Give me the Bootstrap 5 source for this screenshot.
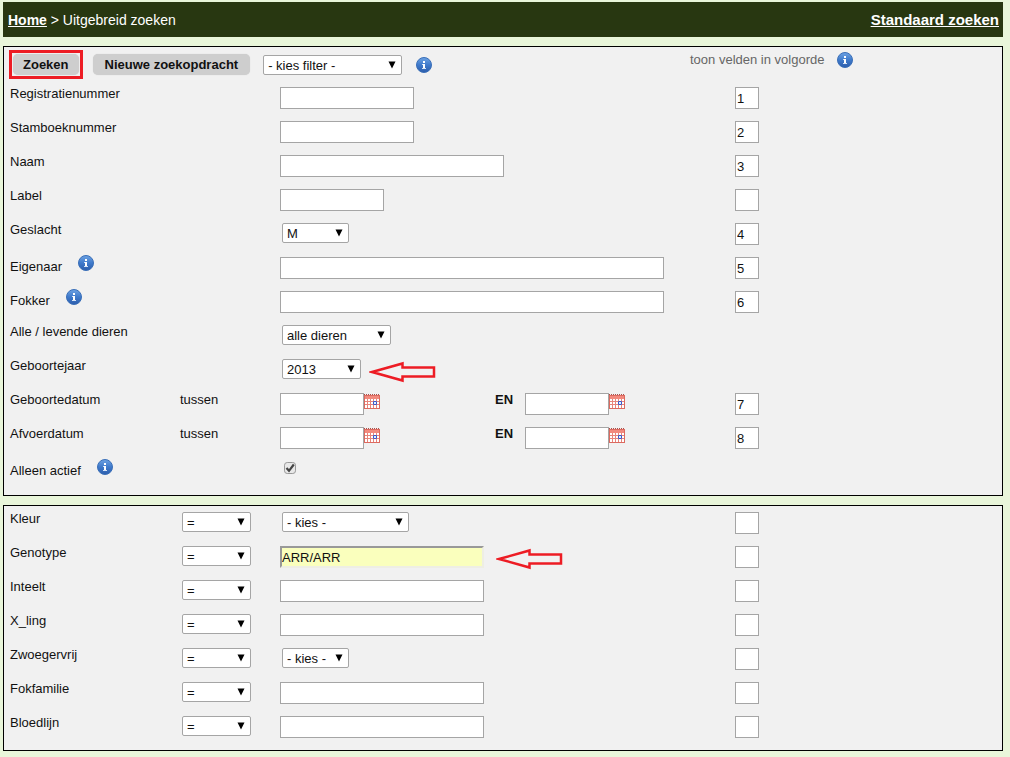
<!DOCTYPE html>
<html lang="nl">
<head>
<meta charset="utf-8">
<meta name="viewport" content="width=device-width, initial-scale=1">
<title>Uitgebreid zoeken</title>
<link href="https://cdn.jsdelivr.net/npm/bootstrap@5.3.0/dist/css/bootstrap.min.css" rel="stylesheet">
<style>
body{background:#e9f6da;font-family:"Liberation Sans",Arial,sans-serif;font-size:13px;line-height:20px;color:#111;padding:2px 7px 6px 3px}
.topbar{background:#283711;color:#fff;font-size:14px;height:35px;padding:0 4px 0 5px}
.topbar a{color:#fff;font-weight:bold}
.topbar .mode-link{font-size:15px}
.panel{background:#f1f1f1;border:1px solid #000;margin-top:9px;padding:2px 0 4px 6px}
.panel-main{padding-top:3px}
.toolrow{height:33px}
.toolrow,.field-row{display:grid;grid-template-columns:170px 100px minmax(0,455fr) minmax(0,267fr);align-items:start}
.toolrow{grid-template-columns:minmax(0,680fr) minmax(0,312fr)}
.tools{margin-left:-1px}
.tools .form-select{margin:0 14px 0 13px}
.field-row{height:34px}
.lbl{padding-top:1px}
.lbl-info{padding-top:4px}
.ctl{display:flex;align-items:start;padding-top:4px}
.ctl .form-select{margin-left:2px}
.daterange{display:grid;grid-template-columns:215px 30px 1fr}
.form-control{width:auto;height:22px;padding:0 1px;border:1px solid #a5a5a5;border-radius:0;font-size:13px;line-height:20px;color:#111;background:#fff}
.form-select{width:auto;height:20px;padding:1px 18px 0 4px;border:1px solid #a5a5a5;border-radius:2px;font-size:13px;line-height:17px;color:#111;background:#fff url("data:image/svg+xml,%3Csvg xmlns='http://www.w3.org/2000/svg' viewBox='0 0 8 8'%3E%3Cpath d='M.5.5h7L4 7.5z'/%3E%3C/svg%3E") no-repeat right 5px center/8px 8px}
.form-control.w-order{width:24px}
.form-control.w-number{width:134px}
.form-control.w-name{width:224px}
.form-control.w-tag{width:104px}
.form-control.w-person{width:384px}
.form-control.w-trait{width:204px}
.form-control.w-date{width:84px}
.s-filter{width:139px}
.s-small{width:67px}
.s-animals{width:109px}
.s-year{width:79px}
.s-color{width:127px}
.s-op{width:69px}
.form-control.filled{background:#faffbd;border:2px solid;border-color:#999 #eeeee4 #eeeee4 #999;padding:0}
.greybtn{height:21px;padding:0 10px;border:0;border-radius:5px;background:#cecece;color:#111;font-size:13px;font-weight:bold;line-height:21px;box-shadow:0 0 1px #ccc}
.greybtn-wide{padding:0 12px;margin-left:10px}
.marked{border:3px solid #ed1c24;padding:1px;height:29px}
.iconbtn{display:block;flex:none;padding:0;border:0;background:none;width:16px;height:16px}
.iconbtn svg,.arrow{display:block}
.field-info{margin-top:2px}
.order-head{color:#666}
.order-head .iconbtn{margin-left:13px}
.arrow{flex:none;margin:2px 0 0 8px}
.filled + .arrow{margin-left:12px}
.form-check-input{width:12px;height:12px;margin:1px 0 0;border:1px solid #999;border-radius:2px;background-color:#e8e8e8}
.form-check-input:checked{background-color:#e8e8e8;border-color:#999;background-size:12px 12px;background-image:url("data:image/svg+xml,%3Csvg xmlns='http://www.w3.org/2000/svg' viewBox='0 0 12 12'%3E%3Cpath d='M2.500 6 5 8.800 9.800 2.500' fill='none' stroke='%23444' stroke-width='2.200'/%3E%3C/svg%3E")}
</style>
</head>
<body>
<svg width="0" height="0" class="position-absolute" aria-hidden="true">
  <defs>
    <linearGradient id="blue" x1="0" y1="0" x2="0" y2="1"><stop offset="0" stop-color="#6ea3e3"/><stop offset=".5" stop-color="#3f7acb"/><stop offset="1" stop-color="#2c5dab"/></linearGradient>
    <symbol id="info" viewBox="0 0 16 16"><circle cx="8" cy="8" r="7.500" fill="url(#blue)" stroke="#3a6fb8"/><path d="M7 4h2v2H7zM7 7h2v5H7z" fill="#fff"/><path d="M6 7h1v1H6zM6 11h4v1H6z" fill="#d5e3f6"/></symbol>
    <symbol id="cal" viewBox="0 0 16 16"><path d="M0 2h16v14H0z" fill="#dc6a60"/><path d="M1 3h14v3H1z" fill="#f28a7e"/><path d="M0 1.500h16" stroke="#a8504a" stroke-dasharray="1 1"/><path d="M1 6h14v9H1z" fill="#fff"/><path d="M1 8.500h14M1 11.500h14M3.500 6v9M6.500 6v9M9.500 6v9M12.500 6v9" stroke="#e8857b"/><path d="M9.500 8.500h3v3h-3z" fill="#dff0ff" stroke="#3d58c8"/></symbol>
    <symbol id="arrow" viewBox="0 0 68 22"><path d="M3 11 33.500 2.500V6.500h31.500v9H33.500v4z" fill="none" stroke="#ed1c24" stroke-width="2.500"/></symbol>
  </defs>
</svg>

<nav class="topbar d-flex align-items-center justify-content-between">
  <div><a href="#">Home</a> &gt; Uitgebreid zoeken</div>
  <a href="#" class="mode-link">Standaard zoeken</a>
</nav>

<form>
<section class="panel panel-main">
  <div class="toolrow">
    <div class="tools d-flex align-items-center">
      <div class="marked d-flex"><button type="button" class="greybtn">Zoeken</button></div>
      <button type="button" class="greybtn greybtn-wide">Nieuwe zoekopdracht</button>
      <select class="form-select s-filter" aria-label="Filter"><option>- kies filter -</option></select>
      <button type="button" class="iconbtn" aria-label="Informatie"><svg width="16" height="16"><use href="#info"/></svg></button>
    </div>
    <div class="d-flex align-items-center order-head">
      <span>toon velden in volgorde</span>
      <button type="button" class="iconbtn" aria-label="Informatie"><svg width="16" height="16"><use href="#info"/></svg></button>
    </div>
  </div>
  <div class="field-row"><label class="lbl" for="reg">Registratienummer</label><span></span><div class="ctl"><input class="form-control w-number" id="reg"></div><div class="ctl"><input class="form-control w-order" value="1" aria-label="Volgorde registratienummer"></div></div>
  <div class="field-row"><label class="lbl" for="stam">Stamboeknummer</label><span></span><div class="ctl"><input class="form-control w-number" id="stam"></div><div class="ctl"><input class="form-control w-order" value="2" aria-label="Volgorde stamboeknummer"></div></div>
  <div class="field-row"><label class="lbl" for="naam">Naam</label><span></span><div class="ctl"><input class="form-control w-name" id="naam"></div><div class="ctl"><input class="form-control w-order" value="3" aria-label="Volgorde naam"></div></div>
  <div class="field-row"><label class="lbl" for="lab">Label</label><span></span><div class="ctl"><input class="form-control w-tag" id="lab"></div><div class="ctl"><input class="form-control w-order" aria-label="Volgorde label"></div></div>
  <div class="field-row"><label class="lbl" for="sex">Geslacht</label><span></span><div class="ctl"><select class="form-select s-small" id="sex"><option>M</option></select></div><div class="ctl"><input class="form-control w-order" value="4" aria-label="Volgorde geslacht"></div></div>
  <div class="field-row"><div class="d-flex gap-3"><label class="lbl-info" for="eig">Eigenaar</label><button type="button" class="iconbtn field-info" aria-label="Informatie"><svg width="16" height="16"><use href="#info"/></svg></button></div><span></span><div class="ctl"><input class="form-control w-person" id="eig"></div><div class="ctl"><input class="form-control w-order" value="5" aria-label="Volgorde eigenaar"></div></div>
  <div class="field-row"><div class="d-flex gap-3"><label class="lbl-info" for="fok">Fokker</label><button type="button" class="iconbtn field-info" aria-label="Informatie"><svg width="16" height="16"><use href="#info"/></svg></button></div><span></span><div class="ctl"><input class="form-control w-person" id="fok"></div><div class="ctl"><input class="form-control w-order" value="6" aria-label="Volgorde fokker"></div></div>
  <div class="field-row"><label class="lbl" for="dieren">Alle / levende dieren</label><span></span><div class="ctl"><select class="form-select s-animals" id="dieren"><option>alle dieren</option></select></div></div>
  <div class="field-row"><label class="lbl" for="jaar">Geboortejaar</label><span></span><div class="ctl"><select class="form-select s-year" id="jaar"><option>2013</option></select><svg class="arrow" width="68" height="22"><use href="#arrow"/></svg></div></div>
  <div class="field-row"><label class="lbl" for="geb">Geboortedatum</label><span class="lbl">tussen</span><div class="daterange"><div class="ctl"><input class="form-control w-date" id="geb"><button type="button" class="iconbtn" aria-label="Kalender"><svg width="16" height="16"><use href="#cal"/></svg></button></div><label class="lbl fw-bold" for="geb2">EN</label><div class="ctl"><input class="form-control w-date" id="geb2"><button type="button" class="iconbtn" aria-label="Kalender"><svg width="16" height="16"><use href="#cal"/></svg></button></div></div><div class="ctl"><input class="form-control w-order" value="7" aria-label="Volgorde geboortedatum"></div></div>
  <div class="field-row"><label class="lbl" for="afv">Afvoerdatum</label><span class="lbl">tussen</span><div class="daterange"><div class="ctl"><input class="form-control w-date" id="afv"><button type="button" class="iconbtn" aria-label="Kalender"><svg width="16" height="16"><use href="#cal"/></svg></button></div><label class="lbl fw-bold" for="afv2">EN</label><div class="ctl"><input class="form-control w-date" id="afv2"><button type="button" class="iconbtn" aria-label="Kalender"><svg width="16" height="16"><use href="#cal"/></svg></button></div></div><div class="ctl"><input class="form-control w-order" value="8" aria-label="Volgorde afvoerdatum"></div></div>
  <div class="field-row"><div class="d-flex gap-3"><label class="lbl-info" for="act">Alleen actief</label><button type="button" class="iconbtn field-info" aria-label="Informatie"><svg width="16" height="16"><use href="#info"/></svg></button></div><span></span><div class="ctl ps-1"><input type="checkbox" class="form-check-input" id="act" checked></div></div>
</section>

<section class="panel">
  <div class="field-row"><label class="lbl" for="kleur">Kleur</label><div class="ctl"><select class="form-select s-op" aria-label="Vergelijking kleur"><option>=</option></select></div><div class="ctl"><select class="form-select s-color" id="kleur"><option>- kies -</option></select></div><div class="ctl"><input class="form-control w-order" aria-label="Volgorde kleur"></div></div>
  <div class="field-row"><label class="lbl" for="geno">Genotype</label><div class="ctl"><select class="form-select s-op" aria-label="Vergelijking genotype"><option>=</option></select></div><div class="ctl"><input class="form-control w-trait filled" id="geno" value="ARR/ARR"><svg class="arrow" width="68" height="22"><use href="#arrow"/></svg></div><div class="ctl"><input class="form-control w-order" aria-label="Volgorde genotype"></div></div>
  <div class="field-row"><label class="lbl" for="int">Inteelt</label><div class="ctl"><select class="form-select s-op" aria-label="Vergelijking inteelt"><option>=</option></select></div><div class="ctl"><input class="form-control w-trait" id="int"></div><div class="ctl"><input class="form-control w-order" aria-label="Volgorde inteelt"></div></div>
  <div class="field-row"><label class="lbl" for="xl">X_ling</label><div class="ctl"><select class="form-select s-op" aria-label="Vergelijking X_ling"><option>=</option></select></div><div class="ctl"><input class="form-control w-trait" id="xl"></div><div class="ctl"><input class="form-control w-order" aria-label="Volgorde X_ling"></div></div>
  <div class="field-row"><label class="lbl" for="zw">Zwoegervrij</label><div class="ctl"><select class="form-select s-op" aria-label="Vergelijking zwoegervrij"><option>=</option></select></div><div class="ctl"><select class="form-select s-small" id="zw"><option>- kies -</option></select></div><div class="ctl"><input class="form-control w-order" aria-label="Volgorde zwoegervrij"></div></div>
  <div class="field-row"><label class="lbl" for="ff">Fokfamilie</label><div class="ctl"><select class="form-select s-op" aria-label="Vergelijking fokfamilie"><option>=</option></select></div><div class="ctl"><input class="form-control w-trait" id="ff"></div><div class="ctl"><input class="form-control w-order" aria-label="Volgorde fokfamilie"></div></div>
  <div class="field-row"><label class="lbl" for="bl">Bloedlijn</label><div class="ctl"><select class="form-select s-op" aria-label="Vergelijking bloedlijn"><option>=</option></select></div><div class="ctl"><input class="form-control w-trait" id="bl"></div><div class="ctl"><input class="form-control w-order" aria-label="Volgorde bloedlijn"></div></div>
</section>
</form>
<script src="https://cdn.jsdelivr.net/npm/bootstrap@5.3.0/dist/js/bootstrap.bundle.min.js"></script>
</body>
</html>
